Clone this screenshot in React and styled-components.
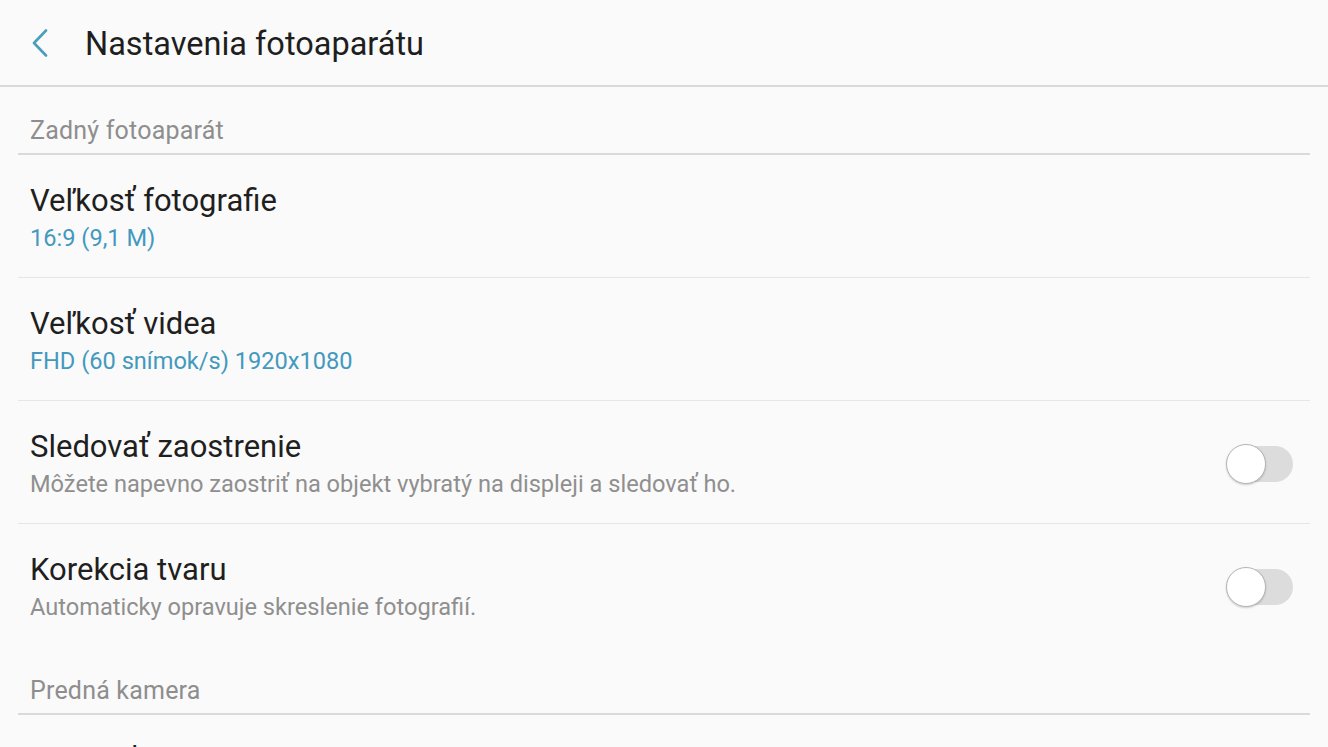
import styled, { createGlobalStyle } from "styled-components";

const GlobalStyle = createGlobalStyle`
  html, body {
    margin: 0;
    padding: 0;
    background: #fafafa;
    font-family: Roboto, "Noto Sans", sans-serif;
    overflow: hidden;
  }
`;

const Page = styled.div`
  width: 1328px;
  height: 747px;
  background: #fafafa;
  overflow: hidden;
`;

const Header = styled.header`
  height: 85px;
  display: flex;
  align-items: center;
  border-bottom: 2px solid #d9d9d9;
`;

const BackButton = styled.button`
  width: 85px;
  height: 85px;
  padding: 0 0 0 31px;
  border: none;
  background: transparent;
  display: flex;
  align-items: center;
  cursor: pointer;
`;

const Title = styled.h1`
  margin: 3px 0 0;
  font-size: 32.5px;
  font-weight: 400;
  color: #1e1e1e;
`;

const List = styled.div`
  padding: 0 18px;
`;

const SectionHeader = styled.div`
  height: 68px;
  box-sizing: border-box;
  padding: 29px 12px 0;
  font-size: 25px;
  line-height: 30px;
  letter-spacing: 0.2px;
  color: #8e8e8e;
  border-bottom: 2px solid #dadada;
`;

const Row = styled.div`
  display: flex;
  align-items: center;
  height: 123px;
  box-sizing: border-box;
  padding: 28px 17px 24px 12px;
  border-bottom: ${(p) => (p.last ? "1px solid transparent" : "1px solid #e6e6e6")};
`;

const Texts = styled.div`
  flex: 1;
  align-self: flex-start;
`;

const ItemTitle = styled.div`
  font-size: 31px;
  line-height: 36px;
  color: #1f1f1f;
`;

const ItemSub = styled.div`
  margin-top: 4px;
  font-size: 23.6px;
  line-height: 30px;
  color: ${(p) => (p.accent ? "#4399bd" : "#8f8f8f")};
`;

const Track = styled.div`
  position: relative;
  width: 66px;
  height: 36px;
  border-radius: 18px;
  background: #dcdcdc;
`;

const Thumb = styled.div`
  position: absolute;
  left: -1px;
  top: -2px;
  width: 38px;
  height: 38px;
  border-radius: 50%;
  background: #fff;
  border: 1px solid #b5b5b5;
  box-shadow: 0 1px 2px rgba(0, 0, 0, 0.18);
`;

const Switch = () => (
  <Track>
    <Thumb />
  </Track>
);

const rear = [
  { title: "Veľkosť fotografie", sub: "16:9 (9,1 M)", accent: true },
  { title: "Veľkosť videa", sub: "FHD (60 snímok/s) 1920x1080", accent: true },
  {
    title: "Sledovať zaostrenie",
    sub: "Môžete napevno zaostriť na objekt vybratý na displeji a sledovať ho.",
    toggle: true,
  },
  {
    title: "Korekcia tvaru",
    sub: "Automaticky opravuje skreslenie fotografií.",
    toggle: true,
  },
];

export default function App() {
  return (
    <Page>
      <GlobalStyle />
      <Header>
        <BackButton aria-label="Späť">
          <svg width="18" height="28" viewBox="0 0 18 28">
            <path
              d="M15 1.5 L3 14 L15 26.5"
              fill="none"
              stroke="#4a9dbc"
              strokeWidth="2.6"
              strokeLinecap="round"
              strokeLinejoin="round"
            />
          </svg>
        </BackButton>
        <Title>Nastavenia fotoaparátu</Title>
      </Header>
      <List>
        <SectionHeader>Zadný fotoaparát</SectionHeader>
        {rear.map((item, i) => (
          <Row key={item.title} last={i === rear.length - 1}>
            <Texts>
              <ItemTitle>{item.title}</ItemTitle>
              <ItemSub accent={item.accent}>{item.sub}</ItemSub>
            </Texts>
            {item.toggle && <Switch />}
          </Row>
        ))}
        <SectionHeader>Predná kamera</SectionHeader>
        <Row>
          <Texts>
            <ItemTitle>Veľkosť fotografie</ItemTitle>
            <ItemSub accent>4:3 (5 M)</ItemSub>
          </Texts>
        </Row>
      </List>
    </Page>
  );
}
